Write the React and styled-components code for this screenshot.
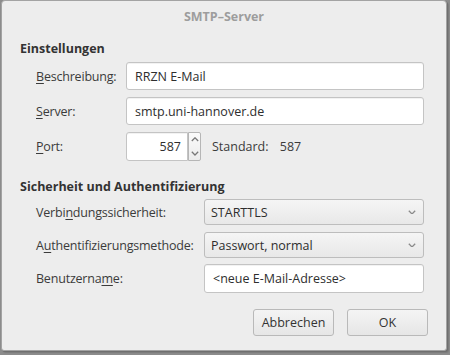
import React from "react";
import styled, { createGlobalStyle } from "styled-components";

const Global = createGlobalStyle`
  html, body {
    margin: 0;
    padding: 0;
    background: #8c8c8c;
    width: 450px;
    height: 355px;
    overflow: hidden;
  }
  body {
    font-family: "Open Sans", "Noto Sans", sans-serif;
    font-size: 12px;
    color: #3b3b3b;
  }
`;

const Window = styled.div`
  box-sizing: border-box;
  margin-left: 1px;
  width: 446px;
  height: 351px;
  background: #ededed;
  border: 1px solid #a3a3a3;
  border-radius: 4px 4px 3px 3px;
  box-shadow: 1px 1px 0 #6f6f6f, 2px 2px 1px #7c7c7c;
  display: flex;
  flex-direction: column;
`;

const TitleBar = styled.div`
  height: 30px;
  display: flex;
  align-items: center;
  justify-content: center;
  color: #9d9d9d;
  font-weight: 700;
  font-size: 12.5px;
`;

const Body = styled.div`
  padding: 0 0 0 18px;
  display: flex;
  flex-direction: column;
`;

const Heading = styled.div`
  font-weight: 700;
  font-size: 12.5px;
  color: #333;
  height: 20px;
  line-height: 20px;
  margin-top: ${(p) => p.$top}px;
  margin-bottom: ${(p) => p.$bottom}px;
`;

const Row = styled.div`
  display: grid;
  grid-template-columns: ${(p) => p.$labelWidth}px auto;
  align-items: center;
  padding-left: 16px;
  margin-bottom: ${(p) => p.$gap}px;
`;

const Label = styled.span`
  color: #3b3b3b;
  font-size: 12.5px;
  letter-spacing: -0.2px;
  u {
    text-decoration-thickness: 1px;
    text-underline-offset: 2px;
  }
`;

const TextField = styled.div`
  box-sizing: border-box;
  width: ${(p) => p.$width}px;
  height: ${(p) => p.$height}px;
  background: #fff;
  border: 1px solid #c4c4c4;
  border-radius: 3px;
  display: flex;
  align-items: center;
  padding: 0 8px;
  font-size: 12.5px;
  color: #2e2e2e;
  box-shadow: inset 0 1px 0 #f2f2f2;
`;

const PortGroup = styled.div`
  display: flex;
  align-items: center;
`;

const PortField = styled(TextField)`
  justify-content: flex-end;
  padding-right: 6px;
  border-radius: 3px 0 0 3px;
`;

const Spin = styled.div`
  box-sizing: border-box;
  width: 13px;
  height: 29px;
  border: 1px solid #b6b6b6;
  border-radius: 0 2px 2px 0;
  background: linear-gradient(#fafafa, #ececec);
  display: flex;
  flex-direction: column;
  align-items: center;
  justify-content: space-between;
  padding: 4px 0;
`;

const Standard = styled.span`
  margin-left: 11px;
  font-size: 12.5px;
  color: #3b3b3b;
  word-spacing: 8px;
`;

const Select = styled.div`
  box-sizing: border-box;
  width: 220px;
  height: ${(p) => p.$height}px;
  border: 1px solid #bdbdbd;
  border-radius: 3px;
  background: linear-gradient(#f5f5f5, #e8e8e8);
  display: flex;
  align-items: center;
  justify-content: space-between;
  padding: 0 7px 0 6px;
  font-size: 12.5px;
  color: #2e2e2e;
`;

const Footer = styled.div`
  display: flex;
  justify-content: flex-end;
  gap: 13px;
  padding-right: 18px;
  margin-top: 16px;
`;

const Button = styled.div`
  box-sizing: border-box;
  width: 81px;
  height: 27px;
  border: 1px solid #b9b9b9;
  border-radius: 3px;
  background: linear-gradient(#f4f4f4, #e6e6e6);
  display: flex;
  align-items: center;
  justify-content: center;
  font-size: 12.5px;
  color: #333;
`;

const Chevron = ({ up, size = 8, color = "#8a8a8a" }) => (
  <svg width={size} height={size * 0.6} viewBox="0 0 10 6">
    <path
      d={up ? "M1 5 L5 1 L9 5" : "M1 1 L5 5 L9 1"}
      fill="none"
      stroke={color}
      strokeWidth="1.6"
    />
  </svg>
);

export default function App() {
  return (
    <>
      <Global />
      <Window>
        <TitleBar>SMTP–Server</TitleBar>
        <Body>
          <Heading $top={8} $bottom={3}>Einstellungen</Heading>
          <Row $labelWidth={90} $gap={7}>
            <Label><u>B</u>eschreibung:</Label>
            <TextField $width={298} $height={28}>RRZN E-Mail</TextField>
          </Row>
          <Row $labelWidth={90} $gap={7}>
            <Label><u>S</u>erver:</Label>
            <TextField $width={298} $height={28}>smtp.uni-hannover.de</TextField>
          </Row>
          <Row $labelWidth={90} $gap={16}>
            <Label><u>P</u>ort:</Label>
            <PortGroup>
              <PortField $width={62} $height={29}>587</PortField>
              <Spin>
                <Chevron up size={8} color="#777" />
                <Chevron size={8} color="#777" />
              </Spin>
              <Standard>Standard: 587</Standard>
            </PortGroup>
          </Row>
          <Heading $top={0} $bottom={2}>Sicherheit und Authentifizierung</Heading>
          <Row $labelWidth={168} $gap={7}>
            <Label>Verbi<u>n</u>dungssicherheit:</Label>
            <Select $height={26}>STARTTLS<Chevron /></Select>
          </Row>
          <Row $labelWidth={168} $gap={6}>
            <Label>A<u>u</u>thentifizierungsmethode:</Label>
            <Select $height={26}>Passwort, normal<Chevron /></Select>
          </Row>
          <Row $labelWidth={168} $gap={0}>
            <Label>Benutzerna<u>m</u>e:</Label>
            <TextField $width={220} $height={29}>&lt;neue E-Mail-Adresse&gt;</TextField>
          </Row>
        </Body>
        <Footer>
          <Button>Abbrechen</Button>
          <Button>OK</Button>
        </Footer>
      </Window>
    </>
  );
}
